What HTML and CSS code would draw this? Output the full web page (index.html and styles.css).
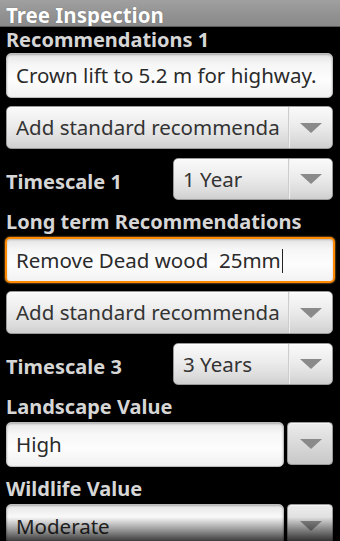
FILE: index.html
```html
<!DOCTYPE html>
<html>
<head>
<meta charset="utf-8">
<link rel="stylesheet" href="styles.css">
</head>
<body>
<div class="screen">
  <div class="titlebar">Tree Inspection</div>
  <div class="content">
    <div class="label first">Recommendations 1</div>
    <div class="field">Crown lift to 5.2 m for highway.</div>
    <div class="spinner wide">
      <span class="spin-text">Add standard recommenda</span>
      <span class="spin-arrow"><span class="tri"></span></span>
    </div>
    <div class="row">
      <div class="row-label">Timescale 1</div>
      <div class="spinner short">
        <span class="spin-text">1 Year</span>
        <span class="spin-arrow"><span class="tri"></span></span>
      </div>
    </div>
    <div class="label">Long term Recommendations</div>
    <div class="field focused">Remove Dead wood&nbsp; 25mm<span class="cursor"></span></div>
    <div class="spinner wide">
      <span class="spin-text">Add standard recommenda</span>
      <span class="spin-arrow"><span class="tri"></span></span>
    </div>
    <div class="row">
      <div class="row-label">Timescale 3</div>
      <div class="spinner short">
        <span class="spin-text">3 Years</span>
        <span class="spin-arrow"><span class="tri"></span></span>
      </div>
    </div>
    <div class="label">Landscape Value</div>
    <div class="combo">
      <div class="combo-text">High</div>
      <div class="combo-btn"><span class="tri"></span></div>
    </div>
    <div class="label">Wildlife Value</div>
    <div class="combo">
      <div class="combo-text">Moderate</div>
      <div class="combo-btn"><span class="tri"></span></div>
    </div>
  </div>
  <div class="fade"></div>
</div>
</body>
</html>
```
FILE: styles.css
```css
html, body {
  margin: 0;
  padding: 0;
  background: #000;
}
.screen {
  position: relative;
  width: 340px;
  height: 541px;
  overflow: hidden;
  background: #000;
  font-family: "Noto Sans", "Open Sans", sans-serif;
}
.titlebar {
  height: 22px;
  padding-top: 4px;
  border-bottom: 1px solid #5a5a5a;
  background: linear-gradient(#a0a0a0, #919191 60%, #8a8a8a);
  color: #fff;
  font-weight: bold;
  font-size: 20.5px;
  line-height: 22px;
  padding-left: 6px;
  text-shadow: 0 0 1px rgba(0,0,0,0.4);
  white-space: nowrap;
  overflow: hidden;
}
.content {
  padding: 0 7px 0 6px;
  border-left: 1px solid #121822;
  margin-left: -1px;
}
.label {
  color: #d6d6d6;
  font-weight: bold;
  font-size: 20px;
  line-height: 24px;
  padding-bottom: 3px;
  margin-top: 10px;
  white-space: nowrap;
}
.label.first {
  margin-top: 1px;
  padding-bottom: 1px;
}
.field {
  height: 45px;
  box-sizing: border-box;
  border-radius: 5px;
  border: 1px solid #bdbdbd;
  background: linear-gradient(#e4e4e4, #f6f6f6 25%, #fdfdfd 60%, #f2f2f2);
  box-shadow: inset 0 1px 2px rgba(0,0,0,0.25);
  color: #2b2b2b;
  font-size: 20.5px;
  line-height: 43px;
  padding-left: 9px;
  white-space: nowrap;
  overflow: hidden;
}
.field.focused {
  height: 46px;
  margin: 0 -2px 0 -1px;
  border: 2px solid #ff8a00;
  box-shadow: 0 0 2px #ffb040, inset 0 1px 2px rgba(0,0,0,0.2);
  line-height: 42px;
  padding-left: 9px;
}
.cursor {
  display: inline-block;
  width: 1px;
  height: 24px;
  background: #222;
  vertical-align: -5px;
  margin-left: 1px;
}
.spinner {
  display: flex;
  height: 43px;
  box-sizing: border-box;
  margin-top: 8px;
  border-radius: 5px;
  border: 1px solid #9a9a9a;
  background: linear-gradient(#fafafa, #ececec 45%, #dcdcdc 80%, #cfcfcf);
  box-shadow: inset 0 1px 0 #fff;
  color: #333;
  font-size: 20.5px;
  overflow: hidden;
}
.spin-text {
  flex: 1;
  min-width: 0;
  line-height: 41px;
  padding-left: 9px;
  white-space: nowrap;
  overflow: hidden;
}
.spin-arrow {
  width: 43px;
  flex: none;
  border-left: 1px solid #cdcdcd;
  box-shadow: inset 1px 0 0 #f0f0f0;
  display: flex;
  align-items: center;
  justify-content: center;
}
.tri {
  width: 0;
  height: 0;
  border-left: 11px solid transparent;
  border-right: 11px solid transparent;
  border-top: 10px solid #8a8a8a;
  margin-left: 1px;
}
.row {
  display: flex;
  align-items: flex-end;
  margin-top: 9px;
  height: 42px;
}
.row-label {
  flex: 1;
  color: #d6d6d6;
  font-weight: bold;
  font-size: 20px;
  line-height: 24px;
  padding-bottom: 6px;
  white-space: nowrap;
}
.row .spinner {
  margin-top: 0;
  width: 160px;
  height: 42px;
}
.combo {
  display: flex;
  gap: 3px;
  height: 45px;
}
.combo-text {
  flex: 1;
  box-sizing: border-box;
  border-radius: 5px;
  border: 1px solid #bdbdbd;
  background: linear-gradient(#e6e6e6, #f7f7f7 25%, #fdfdfd 60%, #f0f0f0);
  box-shadow: inset 0 1px 2px rgba(0,0,0,0.25);
  color: #2b2b2b;
  font-size: 20.5px;
  line-height: 43px;
  padding-left: 9px;
}
.combo-btn {
  width: 46px;
  height: 43px;
  box-sizing: border-box;
  border-radius: 4px;
  border: 1px solid #9a9a9a;
  background: linear-gradient(#ececec, #dadada 50%, #c8c8c8);
  box-shadow: inset 0 1px 0 #f6f6f6;
  display: flex;
  align-items: center;
  justify-content: center;
}
.fade {
  position: absolute;
  left: 0;
  right: 0;
  bottom: 0;
  height: 24px;
  background: linear-gradient(rgba(0,0,0,0), rgba(0,0,0,0.75));
  pointer-events: none;
}
```
